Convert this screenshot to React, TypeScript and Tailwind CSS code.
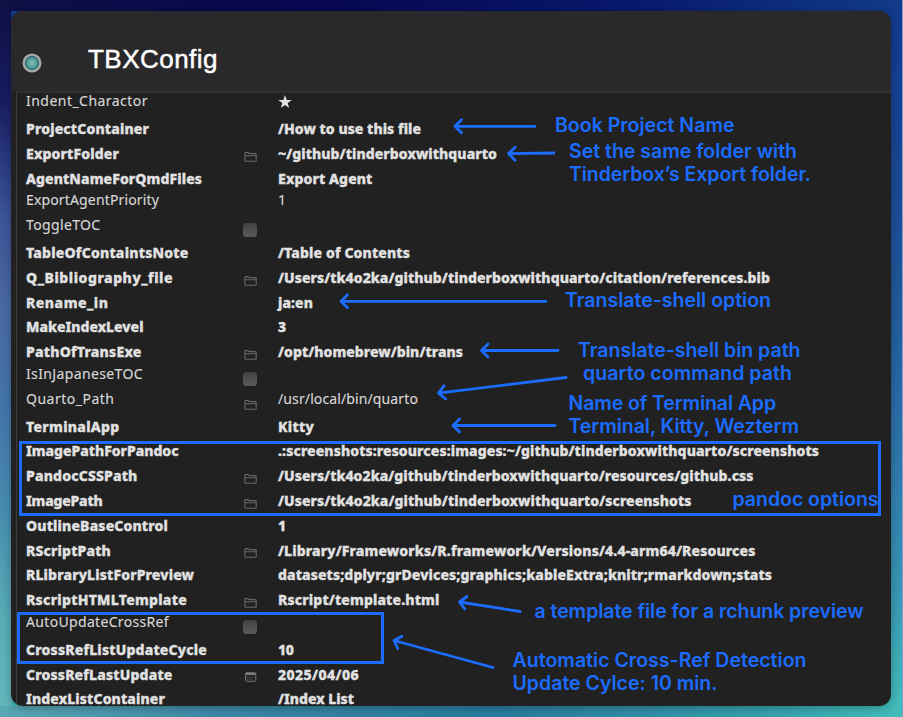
import { useLayoutEffect, useRef, useState } from "react";

type Mark = "folder" | "check" | "date";
type Row = {
  label: string;
  labelWidth: number;
  value?: string;
  valueWidth?: number;
  mark?: Mark;
  plain?: boolean;
};

const rows: Row[] = [
  { label: "Indent_Charactor", labelWidth: 122, value: "★", plain: true },
  { label: "ProjectContainer", labelWidth: 123, value: "/How to use this file", valueWidth: 143 },
  { label: "ExportFolder", labelWidth: 93, value: "~/github/tinderboxwithquarto", valueWidth: 219, mark: "folder" },
  { label: "AgentNameForQmdFiles", labelWidth: 176, value: "Export Agent", valueWidth: 94.5 },
  { label: "ExportAgentPriority", labelWidth: 133, value: "1", plain: true },
  { label: "ToggleTOC", labelWidth: 74.5, mark: "check", plain: true },
  { label: "TableOfContaintsNote", labelWidth: 162.5, value: "/Table of Contents", valueWidth: 132 },
  { label: "Q_Bibliography_file", labelWidth: 147, value: "/Users/tk4o2ka/github/tinderboxwithquarto/citation/references.bib", valueWidth: 492, mark: "folder" },
  { label: "Rename_in", labelWidth: 82.5, value: "ja:en", valueWidth: 35 },
  { label: "MakeIndexLevel", labelWidth: 117.5, value: "3" },
  { label: "PathOfTransExe", labelWidth: 115.5, value: "/opt/homebrew/bin/trans", valueWidth: 185, mark: "folder" },
  { label: "IsInJapaneseTOC", labelWidth: 117, mark: "check", plain: true },
  { label: "Quarto_Path", labelWidth: 88.5, value: "/usr/local/bin/quarto", valueWidth: 140, mark: "folder", plain: true },
  { label: "TerminalApp", labelWidth: 93.5, value: "Kitty", valueWidth: 36 },
  { label: "ImagePathForPandoc", labelWidth: 152.5, value: ".:screenshots:resources:images:~/github/tinderboxwithquarto/screenshots", valueWidth: 541 },
  { label: "PandocCSSPath", labelWidth: 111.5, value: "/Users/tk4o2ka/github/tinderboxwithquarto/resources/github.css", valueWidth: 475.5, mark: "folder" },
  { label: "ImagePath", labelWidth: 76.5, value: "/Users/tk4o2ka/github/tinderboxwithquarto/screenshots", valueWidth: 413.5, mark: "folder" },
  { label: "OutlineBaseControl", labelWidth: 142, value: "1" },
  { label: "RScriptPath", labelWidth: 85, value: "/Library/Frameworks/R.framework/Versions/4.4-arm64/Resources", valueWidth: 477.5, mark: "folder" },
  { label: "RLibraryListForPreview", labelWidth: 168, value: "datasets;dplyr;grDevices;graphics;kableExtra;knitr;rmarkdown;stats", valueWidth: 494 },
  { label: "RscriptHTMLTemplate", labelWidth: 161, value: "Rscript/template.html", valueWidth: 161.5, mark: "folder" },
  { label: "AutoUpdateCrossRef", labelWidth: 143, mark: "check", plain: true },
  { label: "CrossRefListUpdateCycle", labelWidth: 181, value: "10", valueWidth: 15.5 },
  { label: "CrossRefLastUpdate", labelWidth: 146.5, value: "2025/04/06", valueWidth: 81, mark: "date" },
  { label: "IndexListContainer", labelWidth: 139, value: "/Index List", valueWidth: 76 },
];

/** One line of text whose tracking is adjusted so it spans the given width. */
function Tracked({ text, width }: { text: string; width?: number }) {
  const ref = useRef<HTMLSpanElement>(null);
  const [spacing, setSpacing] = useState(0);
  useLayoutEffect(() => {
    if (!ref.current || !width) return;
    setSpacing((width - ref.current.getBoundingClientRect().width) / text.length);
  }, [text, width]);
  return (
    <span ref={ref} className="inline-block whitespace-pre" style={{ letterSpacing: spacing }}>
      {text}
    </span>
  );
}

function MarkIcon({ mark }: { mark?: Mark }) {
  if (mark === "check")
    return <span className="-ml-px mt-[3px] size-[14px] rounded-[3.5px] bg-linear-to-b from-[#424242] to-[#5b5b5b]" />;
  if (mark === "folder")
    return (
      <svg viewBox="0 0 13 10" className="mt-[5px] h-[10px] w-[13px]" fill="none" stroke="#686868" strokeWidth="1.1">
        <path d="M.9 3.7V1.5Q.9.6 1.8.6h2.4l1 1h6q1 0 1 .9v5.9q0 .9-1 .9H1.8q-.9 0-.9-.9V3.7h11.3" />
      </svg>
    );
  if (mark === "date")
    return (
      <svg viewBox="0 0 13 10" className="mt-[5px] h-[10px] w-[13px]" fill="none" stroke="#7a7a7a">
        <rect x="1.5" y=".7" width="10.3" height="8.6" rx="1" />
        <path d="M2 2h9.5" strokeWidth="1.8" />
        <path d="M3 5.3h7M3 7.3h5" stroke="#4c4c4c" strokeDasharray="1.4 .8" strokeWidth="1.3" />
      </svg>
    );
  return null;
}

type NoteLine = { text: string; width: number };
const notes: { place: string; lines: NoteLine[] }[] = [
  { place: "left-[555px] top-[113.5px]", lines: [{ text: "Book Project Name", width: 179.5 }] },
  {
    place: "left-[569px] top-[139.5px]",
    lines: [
      { text: "Set the same folder with", width: 228 },
      { text: "Tinderbox’s Export folder.", width: 242 },
    ],
  },
  { place: "left-[565px] top-[289px]", lines: [{ text: "Translate-shell option", width: 206 }] },
  { place: "left-[578px] top-[339px]", lines: [{ text: "Translate-shell bin path", width: 222.5 }] },
  { place: "left-[583px] top-[362px]", lines: [{ text: "quarto command path", width: 209 }] },
  {
    place: "left-[568.5px] top-[392px]",
    lines: [
      { text: "Name of Terminal App", width: 207.5 },
      { text: "Terminal, Kitty, Wezterm", width: 230.5 },
    ],
  },
  { place: "left-[732.5px] top-[488px]", lines: [{ text: "pandoc options", width: 146 }] },
  { place: "left-[534.5px] top-[600px]", lines: [{ text: "a template file for a rchunk preview", width: 329 }] },
  {
    place: "left-[512.5px] top-[649px]",
    lines: [
      { text: "Automatic Cross-Ref Detection", width: 294 },
      { text: "Update Cylce: 10 min.", width: 205 },
    ],
  },
];

const arrows = [
  "M535 126.3H455M461.5 119.8L455 126.3L461.5 132.8",
  "M554 153L508.5 153.6M515.2 147.2L508.5 153.6L515 160.2",
  "M546 301.3H341M347.5 294.8L341 301.3L347.5 307.8",
  "M558 350.5H481.5M488 344L481.5 350.5L488 357",
  "M566 377.5L438.5 393.2M444 385.8L438.5 393.2L445.8 399",
  "M555 425.5H453M459.5 419L453 425.5L459.5 432",
  "M520 611.5L459.5 602M467 596.5L459.5 602L464.8 609",
  "M493 667.5L394 640.5M402 636.3L394 640.5L397.8 648.5",
];

export default function App() {
  return (
    <main className="relative h-[717px] w-[903px] overflow-hidden bg-[linear-gradient(to_bottom,#12398f_0%,#174493_20%,#215a9b_43%,#2d73aa_62%,#3895b4_82%,#43bfba_100%)] p-[11px] pr-3 font-['Noto_Sans',sans-serif]">
      <div className="absolute inset-x-0 top-0 h-[11px] bg-[linear-gradient(to_right,#100f45,#08064f_33%,#07176a_68%,#123b89)]" />
      <div className="absolute left-0 top-0 h-full w-[11px] bg-[linear-gradient(to_bottom,#100f45,#181d62_14%,#3b5496_30%,#4a69a3_43%,#4375ab_57%,#4991b0_73%,#58abb6_86%,#65b7bd)]" />
      <div className="absolute inset-x-0 bottom-0 h-[11px] bg-[linear-gradient(to_right,#57a7b3,#3a88a6_25%,#2a7a9e_55%,#36a0ad_85%,#43bdba)]" />
      <div className="absolute right-0 top-0 h-full w-px bg-[#7ba0cf]" />

      <section className="relative flex h-[695px] flex-col overflow-hidden rounded-xl bg-[#212121] shadow-[0_2px_9px_#00000048]">
        <header className="flex h-20 shrink-0 items-end bg-[#29292b] pb-[17px] pl-[11px]">
          <svg viewBox="0 0 20 20" className="mb-px size-5">
            <defs>
              <radialGradient id="orb">
                <stop offset="0" stopColor="#8bbfbb" />
                <stop offset="1" stopColor="#46918f" />
              </radialGradient>
            </defs>
            <circle cx="10" cy="10" r="9.5" fill="#a9a9a7" />
            <circle cx="10" cy="10" r="7.2" fill="#2f7577" />
            <circle cx="10" cy="10" r="5.8" fill="url(#orb)" />
          </svg>
          <h1 className="ml-[46px] font-['Liberation_Sans',sans-serif] text-[26px] leading-[30px] text-white [-webkit-text-stroke:0.45px_white]">
            <Tracked text="TBXConfig" width={130} />
          </h1>
        </header>
        <div className="ml-[5px] h-[615px] overflow-hidden border-l border-t-2 border-l-[#3b3b3b] border-t-[#303030]">
          <ul className="-mt-[0.8px] pl-[9px] text-[14px] leading-[24.8px]">
            {rows.map((row) => (
              <li
                key={row.label}
                className="grid h-[24.8px] grid-cols-[218px_34px_1fr] items-center text-[#e2e2e2]"
              >
                <span className={row.plain ? "-mt-[6px] text-[#d6d6d6] [-webkit-text-stroke:0.15px_#d6d6d6]" : "font-extrabold [-webkit-text-stroke:0.35px_#e2e2e2]"}>
                  <Tracked text={row.label} width={row.labelWidth} />
                </span>
                <MarkIcon mark={row.mark} />
                <span className={row.plain ? "col-start-3 -mt-[6px] text-[#d6d6d6] [-webkit-text-stroke:0.15px_#d6d6d6]" : "col-start-3 font-extrabold [-webkit-text-stroke:0.35px_#e2e2e2]"}>
                  {row.value === "★" ? (
                    <svg viewBox="0 0 14 14" className="size-[14px]" fill="#e2e2e2">
                      <path d="M7 0l1.7 5h5.1L9.7 8.1l1.5 5L7 10.1l-4.2 3 1.5-5L.2 5h5.1z" />
                    </svg>
                  ) : (
                    row.value && <Tracked text={row.value} width={row.valueWidth} />
                  )}
                </span>
              </li>
            ))}
          </ul>
        </div>
      </section>

      <div className="absolute left-[19px] top-[441px] h-[75px] w-[862px] border-3 border-[#1b6cff]" />
      <div className="absolute left-[17px] top-[612px] h-[52px] w-[367px] border-3 border-[#1b6cff]" />

      {notes.map((note) => (
        <p
          key={note.place}
          className={`absolute ${note.place} flex flex-col items-start font-['Inter',sans-serif] text-[19.5px] font-semibold leading-[23px] text-[#1b6cff]`}
        >
          {note.lines.map((line) => (
            <Tracked key={line.text} text={line.text} width={line.width} />
          ))}
        </p>
      ))}

      <svg
        viewBox="0 0 903 717"
        className="pointer-events-none absolute inset-0 h-[717px] w-[903px]"
        fill="none"
        stroke="#1b6cff"
        strokeWidth="2.8"
        strokeLinecap="round"
        strokeLinejoin="round"
      >
        {arrows.map((d) => (
          <path key={d} d={d} />
        ))}
      </svg>
    </main>
  );
}
